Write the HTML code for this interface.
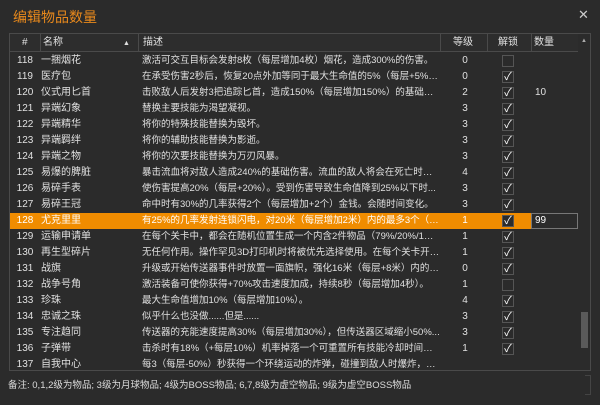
<!DOCTYPE html>
<html><head><meta charset="utf-8"><style>
*{margin:0;padding:0;box-sizing:border-box}
body{width:600px;height:405px;background:#2b2b2b;font-family:"Liberation Sans","Noto Sans CJK SC",sans-serif;font-size:10px;color:#e0e0e0;position:relative;overflow:hidden}
.title{position:absolute;left:13px;top:7px;font-size:14px;color:#e8891c}
.x{position:absolute;left:578px;top:7px;font-size:13px;color:#ccc}
.tbl{position:absolute;left:9px;top:33px;width:582px;height:338px;border:1px solid #4a4a4a;background:#2b2b2b;overflow:hidden}
.hdr{position:absolute;left:0;top:0;width:568px;height:18px;border-bottom:1px solid #4a4a4a;background:#2d2d2d}
.hdr span{position:absolute;top:2px;line-height:14px}
.vd{position:absolute;top:0;height:18px;border-left:1px solid #4a4a4a}
.row{position:absolute;left:0;width:568px;height:16px;line-height:16px;white-space:nowrap}
.row span{position:absolute;top:0}
.n{left:0;width:30px;text-align:center}
.nm{left:31px}
.d{left:132px;width:298px;overflow:hidden;text-overflow:ellipsis;font-size:9.5px}
.l{left:430px;width:50px;text-align:center}
.cb{position:absolute;left:492px;top:2px;width:12px;height:12px;border:1px solid #555;background:#2b2b2b;color:#fff;font-size:11px;line-height:10px;text-align:center}
.q{left:525px}
.sel{background:#f08c00;color:#fff}
.sb{position:absolute;left:568px;top:0;width:13px;height:338px;background:#2b2b2b}
.thumb{position:absolute;left:3px;top:278px;width:7px;height:36px;background:#5a5a5a}
.foot{position:absolute;left:8px;top:377px;font-size:9.5px;color:#ddd}
</style></head><body>
<div class="title">编辑物品数量</div>
<div class="x">✕</div>
<div class="tbl">
<div class="hdr">
<span style="left:12px">#</span>
<div class="vd" style="left:30px"></div>
<span style="left:33px">名称</span>
<span style="left:113px;font-size:7px;top:3px">▲</span>
<div class="vd" style="left:128px"></div>
<span style="left:133px">描述</span>
<div class="vd" style="left:430px"></div>
<span style="left:443px">等级</span>
<div class="vd" style="left:477px"></div>
<span style="left:488px">解锁</span>
<div class="vd" style="left:521px"></div>
<span style="left:524px">数量</span>
</div>
<div style="position:absolute;top:19px;left:0;width:568px">
<div class="row" style="top:0"><span class="n">118</span><span class="nm">一捆烟花</span><span class="d">激活可交互目标会发射8枚（每层增加4枚）烟花，造成300%的伤害。</span><span class="l">0</span><div class="cb"></div></div>
<div class="row" style="top:16px"><span class="n">119</span><span class="nm">医疗包</span><span class="d">在承受伤害2秒后，恢复20点外加等同于最大生命值的5%（每层+5%）...</span><span class="l">0</span><div class="cb">✓</div></div>
<div class="row" style="top:32px"><span class="n">120</span><span class="nm">仪式用匕首</span><span class="d">击败敌人后发射3把追踪匕首，造成150%（每层增加150%）的基础伤害...</span><span class="l">2</span><div class="cb">✓</div><span class="q">10</span></div>
<div class="row" style="top:48px"><span class="n">121</span><span class="nm">异端幻象</span><span class="d">替换主要技能为渴望凝视。</span><span class="l">3</span><div class="cb">✓</div></div>
<div class="row" style="top:64px"><span class="n">122</span><span class="nm">异端精华</span><span class="d">将你的特殊技能替换为毁坏。</span><span class="l">3</span><div class="cb">✓</div></div>
<div class="row" style="top:80px"><span class="n">123</span><span class="nm">异端羁绊</span><span class="d">将你的辅助技能替换为影逝。</span><span class="l">3</span><div class="cb">✓</div></div>
<div class="row" style="top:96px"><span class="n">124</span><span class="nm">异端之物</span><span class="d">将你的次要技能替换为万刃风暴。</span><span class="l">3</span><div class="cb">✓</div></div>
<div class="row" style="top:112px"><span class="n">125</span><span class="nm">易爆的脾脏</span><span class="d">暴击流血将对敌人造成240%的基础伤害。流血的敌人将会在死亡时爆炸...</span><span class="l">4</span><div class="cb">✓</div></div>
<div class="row" style="top:128px"><span class="n">126</span><span class="nm">易碎手表</span><span class="d">使伤害提高20%（每层+20%）。受到伤害导致生命值降到25%以下时...</span><span class="l">3</span><div class="cb">✓</div></div>
<div class="row" style="top:144px"><span class="n">127</span><span class="nm">易碎王冠</span><span class="d">命中时有30%的几率获得2个（每层增加+2个）金钱。会随时间变化。</span><span class="l">3</span><div class="cb">✓</div></div>
<div class="row sel" style="top:160px;width:521px"><span class="n">128</span><span class="nm">尤克里里</span><span class="d">有25%的几率发射连锁闪电，对20米（每层增加2米）内的最多3个（每...</span><span class="l">1</span><div class="cb">✓</div></div>
<div style="position:absolute;left:521px;top:160px;width:47px;height:16px;border:1px solid #777;background:#2b2b2b;color:#fff;line-height:14px;padding-left:3px">99</div>
<div class="row" style="top:176px"><span class="n">129</span><span class="nm">运输申请单</span><span class="d">在每个关卡中，都会在随机位置生成一个内含2件物品（79%/20%/1%...</span><span class="l">1</span><div class="cb">✓</div></div>
<div class="row" style="top:192px"><span class="n">130</span><span class="nm">再生型碎片</span><span class="d">无任何作用。操作罕见3D打印机时将被优先选择使用。在每个关卡开始...</span><span class="l">1</span><div class="cb">✓</div></div>
<div class="row" style="top:208px"><span class="n">131</span><span class="nm">战旗</span><span class="d">升级或开始传送器事件时放置一面旗帜，强化16米（每层+8米）内的全...</span><span class="l">0</span><div class="cb">✓</div></div>
<div class="row" style="top:224px"><span class="n">132</span><span class="nm">战争号角</span><span class="d">激活装备可使你获得+70%攻击速度加成，持续8秒（每层增加4秒）。</span><span class="l">1</span><div class="cb"></div></div>
<div class="row" style="top:240px"><span class="n">133</span><span class="nm">珍珠</span><span class="d">最大生命值增加10%（每层增加10%）。</span><span class="l">4</span><div class="cb">✓</div></div>
<div class="row" style="top:256px"><span class="n">134</span><span class="nm">忠诚之珠</span><span class="d">似乎什么也没做......但是......</span><span class="l">3</span><div class="cb">✓</div></div>
<div class="row" style="top:272px"><span class="n">135</span><span class="nm">专注趋同</span><span class="d">传送器的充能速度提高30%（每层增加30%），但传送器区域缩小50%...</span><span class="l">3</span><div class="cb">✓</div></div>
<div class="row" style="top:288px"><span class="n">136</span><span class="nm">子弹带</span><span class="d">击杀时有18%（+每层10%）机率掉落一个可重置所有技能冷却时间的弹...</span><span class="l">1</span><div class="cb">✓</div></div>
<div class="row" style="top:304px"><span class="n">137</span><span class="nm">自我中心</span><span class="d">每3（每层-50%）秒获得一个环绕运动的炸弹，碰撞到敌人时爆炸，造...</span></div>
</div>
<div class="sb"><div style="position:absolute;left:3px;top:4px;font-size:6px;color:#aaa">▲</div><div class="thumb"></div></div>
</div>
<div class="foot">备注: 0,1,2级为物品; 3级为月球物品; 4级为BOSS物品; 6,7,8级为虚空物品; 9级为虚空BOSS物品</div>
<div style="position:absolute;left:585px;top:375px;width:6px;height:20px;border:1px solid #444;border-left:none"></div>
</body></html>
